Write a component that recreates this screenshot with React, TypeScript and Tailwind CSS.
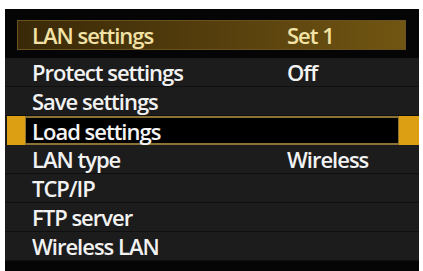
import React from 'react';

const rows: { label: string; value?: string }[] = [
  { label: 'Protect settings', value: 'Off' },
  { label: 'Save settings' },
  { label: 'Load settings' },
  { label: 'LAN type', value: 'Wireless' },
  { label: 'TCP/IP' },
  { label: 'FTP server' },
  { label: 'Wireless LAN' },
];

const selected = 2;

export default function App() {
  return (
    <div className="w-[423px] h-[271px] bg-white pt-[9px] pl-[5px] overflow-hidden" style={{ fontFamily: '"Open Sans", "Liberation Sans", sans-serif' }}>
      <div className="w-[414px] h-[262px] bg-[#050505] flex flex-col">
        {/* header */}
        <div className="mt-[11px] ml-[12px] w-[389px] h-[30px] flex items-center border border-[#6a5220] bg-gradient-to-r from-[#3a2908] to-[#715512] text-[#f2e2a6] text-[22px] leading-none font-semibold tracking-[-1px]">
          <span className="pl-[14px] w-[269px]">LAN settings</span>
          <span>Set 1</span>
        </div>

        {/* menu list */}
        <div className="mt-[8px] flex flex-col text-[22px] leading-none font-semibold tracking-[-1px]">
          {rows.map((row, i) =>
            i === selected ? (
              <div key={row.label} className="h-[29px] flex bg-[#1b1b1b]">
                <div className="w-[18px] ml-[2px] bg-[#dc9e12]" />
                <div className="flex-1 flex items-center bg-black border-y-2 border-x border-[#8d7236] text-[#f4f4f4]">
                  <span className="pl-[6px] w-[262px]">{row.label}</span>
                  <span>{row.value}</span>
                </div>
                <div className="w-[20px] bg-[#dc9e12]" />
              </div>
            ) : (
              <div key={row.label} className="h-[29px] flex items-center bg-[#1c1c1c] border-b border-[#101010] text-[#f2f2f2]">
                <span className="pl-[27px] w-[282px]">{row.label}</span>
                <span>{row.value}</span>
              </div>
            )
          )}
        </div>
      </div>
    </div>
  );
}
